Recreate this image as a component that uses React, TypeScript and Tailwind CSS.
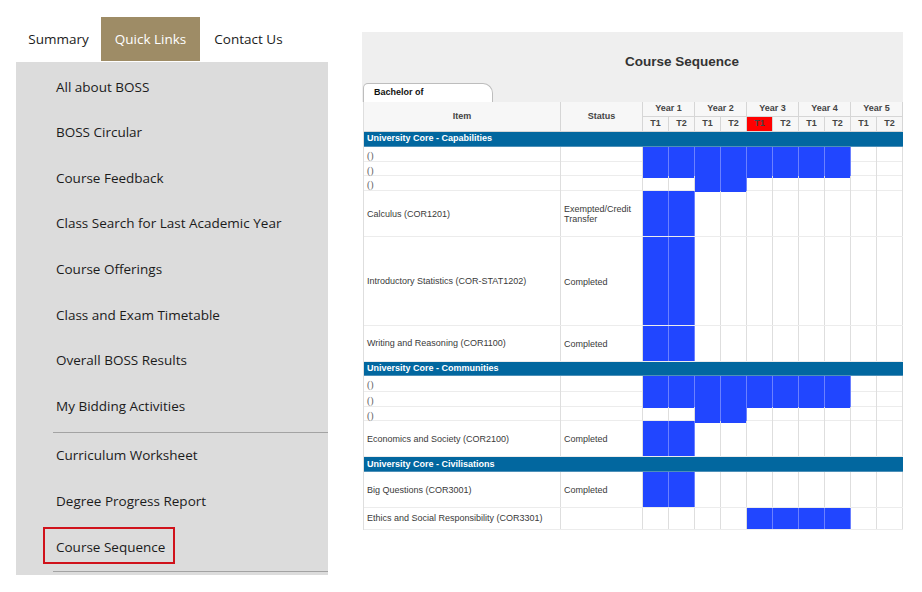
import React from 'react';

type Row = { item: string; status?: string; h: number; blue: number[] };
type Section = { title: string; h: number; rows: Row[] };

const menu = [
  'All about BOSS',
  'BOSS Circular',
  'Course Feedback',
  'Class Search for Last Academic Year',
  'Course Offerings',
  'Class and Exam Timetable',
  'Overall BOSS Results',
  'My Bidding Activities',
];

const all8 = [0, 1, 2, 3, 4, 5, 6, 7];

const sections: Section[] = [
  {
    title: 'University Core - Capabilities',
    h: 15,
    rows: [
      { item: '()', h: 15.3, blue: all8 },
      { item: '()', h: 14.7, blue: all8 },
      { item: '()', h: 15, blue: [2, 3] },
      { item: 'Calculus (COR1201)', status: 'Exempted/Credit Transfer', h: 46, blue: [0, 1] },
      { item: 'Introductory Statistics (COR-STAT1202)', status: 'Completed', h: 89, blue: [0, 1] },
      { item: 'Writing and Reasoning (COR1100)', status: 'Completed', h: 35.3, blue: [0, 1] },
    ],
  },
  {
    title: 'University Core - Communities',
    h: 14.7,
    rows: [
      { item: '()', h: 15.3, blue: all8 },
      { item: '()', h: 15, blue: all8 },
      { item: '()', h: 14.7, blue: [2, 3] },
      { item: 'Economics and Society (COR2100)', status: 'Completed', h: 36, blue: [0, 1] },
    ],
  },
  {
    title: 'University Core - Civilisations',
    h: 15,
    rows: [
      { item: 'Big Questions (COR3001)', status: 'Completed', h: 35.6, blue: [0, 1] },
      { item: 'Ethics and Social Responsibility (COR3301)', h: 21.7, blue: [4, 5, 6, 7] },
    ],
  },
];

const terms = Array.from({ length: 10 }, (_, i) => i);

function SideMenu() {
  return (
    <div className="ml-4 mt-[17px] w-[312px] font-['Open_Sans',sans-serif] text-[13.5px] text-[#1b1b1b]">
      <div className="flex h-[44px] items-stretch">
        <div className="flex w-[85px] items-center justify-center">Summary</div>
        <div className="flex w-[99px] items-center justify-center bg-[#9e8c66] text-white">Quick Links</div>
        <div className="flex w-[97px] items-center justify-center">Contact Us</div>
      </div>
      <div className="mt-px h-[513px] bg-[#dcdcdc] pl-[37px] pt-[2px]">
        {menu.map((m) => (
          <div key={m} className="flex h-[45.6px] items-center pl-[3px]">
            {m}
          </div>
        ))}
        <div className="mt-[3px] border-t border-[#a3a3a3]" />
        <div className="flex h-[45.6px] items-center pl-[3px]">Curriculum Worksheet</div>
        <div className="flex h-[45.6px] items-center pl-[3px]">Degree Progress Report</div>
        <div className="relative flex h-[45.6px] items-center pl-[3px]">
          Course Sequence
          <div className="absolute left-[-10px] top-[3px] h-[37px] w-[132px] border-2 border-[#d0121b]" />
        </div>
        <div className="mt-[1px] border-t border-[#a3a3a3]" />
      </div>
    </div>
  );
}

function SequenceTable() {
  const grid = 'grid grid-cols-[197px_82px_repeat(10,1fr)]';
  const head = 'flex items-center justify-center border-r border-[#d6d6d6] pt-px';
  return (
    <div className="w-[541px] font-['Liberation_Sans',Arial,sans-serif] text-[9px] text-[#3a3a3a]">
      <div className="h-[69.5px] bg-[#efefef] pl-px">
        <div className="pl-[262px] pt-[21px] text-[13.5px] font-bold leading-[18px] text-[#333]">Course Sequence</div>
        <div className="mt-[11.5px] flex h-[19px] w-[130px] items-center rounded-tl-[5px] rounded-tr-[10px] border border-b-0 border-[#bdbdbd] bg-white pl-[10px] pt-px font-bold text-[#111]">
          Bachelor of
        </div>
      </div>
      <div className="ml-px w-[540px] border-l border-[#dedede] bg-white">
        <div className={`${grid} grid-rows-[15px_14px] border-b border-[#d6d6d6] bg-[#f7f7f7] font-bold text-[#444]`}>
          <div className={`row-span-2 ${head}`}>Item</div>
          <div className={`row-span-2 ${head}`}>Status</div>
          {[1, 2, 3, 4, 5].map((y) => (
            <div key={y} className={`col-span-2 border-b ${head}`}>
              Year {y}
            </div>
          ))}
          {terms.map((t) => (
            <div key={t} className={`${head} ${t === 4 ? 'bg-[#ff0000]' : ''}`}>
              {t % 2 === 0 ? 'T1' : 'T2'}
            </div>
          ))}
        </div>
        {sections.map((s) => (
          <div key={s.title}>
            <div
              className="flex items-center border-b border-[#4d90b8] bg-[#02679f] pl-[3px] pt-px font-bold text-white"
              style={{ height: s.h }}
            >
              {s.title}
            </div>
            {s.rows.map((r, i) => (
              <div key={i} className={`${grid} border-b border-[#ececec]`} style={{ height: r.h }}>
                <div
                  className={`flex items-center border-r border-[#dedede] pl-[3px] pt-px ${
                    r.item === '()' ? "font-['Liberation_Serif',serif] text-[10px] text-[#666]" : ''
                  }`}
                >
                  {r.item}
                </div>
                <div className="flex items-center border-r border-[#dedede] pl-[3px] pr-1 pt-px leading-[10px]">
                  {r.status}
                </div>
                {terms.map((t) => (
                  <div
                    key={t}
                    className={`border-r ${
                      r.blue.includes(t) ? 'border-[#6b80ff] bg-[#2146ff]' : 'border-[#dedede]'
                    }`}
                  />
                ))}
              </div>
            ))}
          </div>
        ))}
      </div>
    </div>
  );
}

export default function App() {
  return (
    <div className="flex h-[592px] w-[922px] bg-white">
      <SideMenu />
      <div className="ml-[34px] mt-[32px]">
        <SequenceTable />
      </div>
    </div>
  );
}
